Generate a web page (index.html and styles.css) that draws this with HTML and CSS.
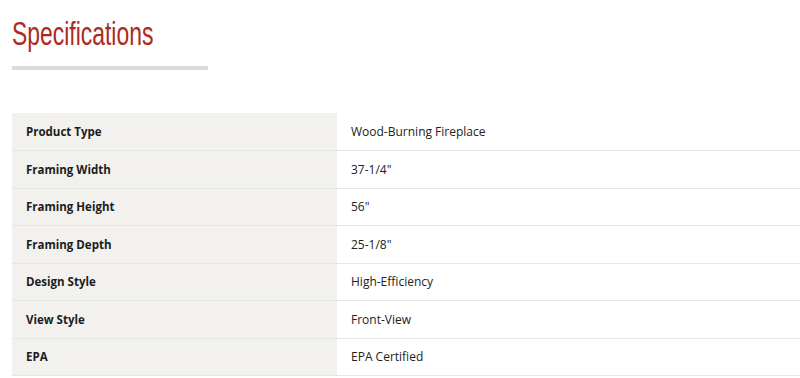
FILE: index.html
```html
<!DOCTYPE html>
<html>
<head>
<meta charset="utf-8">
<link rel="stylesheet" href="styles.css">
</head>
<body>
<section class="specs">
  <h2 class="specs-title">Specifications</h2>
  <div class="specs-rule"></div>
  <table class="specs-table">
    <tbody>
      <tr><th>Product Type</th><td>Wood-Burning Fireplace</td></tr>
      <tr><th>Framing Width</th><td>37-1/4"</td></tr>
      <tr><th>Framing Height</th><td>56"</td></tr>
      <tr><th>Framing Depth</th><td>25-1/8"</td></tr>
      <tr><th>Design Style</th><td>High-Efficiency</td></tr>
      <tr><th>View Style</th><td>Front-View</td></tr>
      <tr><th>EPA</th><td>EPA Certified</td></tr>
    </tbody>
  </table>
</section>
</body>
</html>
```
FILE: styles.css
```css
html, body {
  margin: 0;
  padding: 0;
  background: #ffffff;
}
.specs {
  padding: 14px 0 0 12px;
}
.specs-title {
  margin: 0;
  font-family: "Liberation Sans", Arial, sans-serif;
  font-weight: 400;
  font-size: 32.5px;
  line-height: 40px;
  color: #ac2a1b;
  transform: scaleX(0.705);
  transform-origin: left center;
}
.specs-rule {
  margin-top: 12px;
  width: 196px;
  height: 4px;
  background: #dbdbdf;
}
.specs-table {
  margin-top: 43px;
  width: 100%;
  border-collapse: collapse;
}
.specs-table tr {
  height: 37.5px;
  border-bottom: 1.5px solid #e6e6e6;
}
.specs-table th {
  width: 311px;
  padding: 0 0 0 14px;
  text-align: left;
  background: #f2f1ee;
  font-family: "Open Sans", sans-serif;
  font-weight: 700;
  font-size: 11.5px;
  color: #1c1c1c;
}
.specs-table td {
  padding: 0 0 0 14px;
  font-family: "Open Sans", sans-serif;
  font-weight: 400;
  font-size: 12px;
  color: #222222;
}
```
